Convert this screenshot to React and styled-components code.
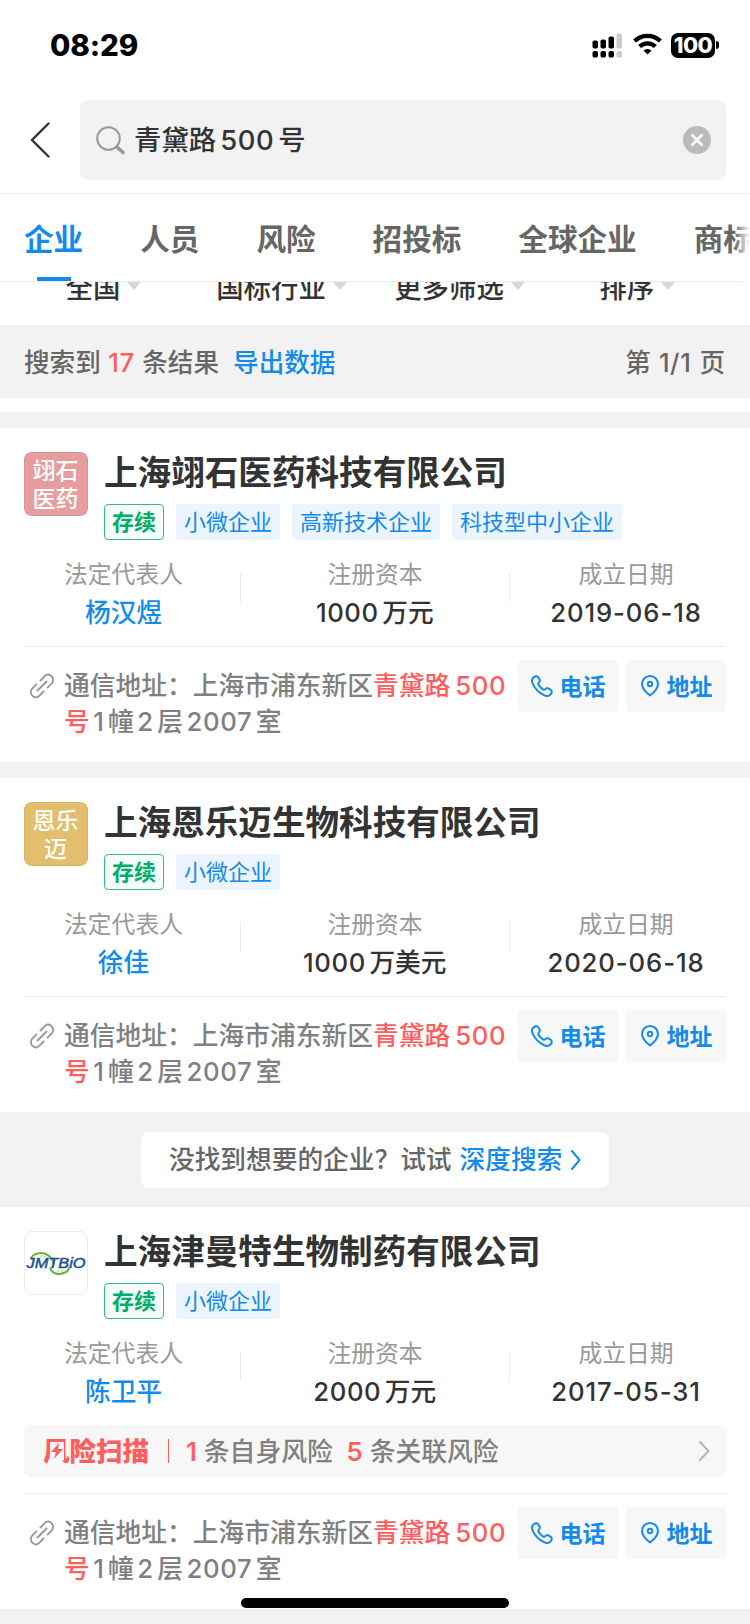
import React from "react";
import styled, { createGlobalStyle } from "styled-components";

const GlobalStyle = createGlobalStyle`
    * {
        box-sizing: border-box;
    }
    body {
        margin: 0;
        background: #f2f2f2;
        font-family: Inter, "Noto Sans CJK SC", sans-serif;
        color: #333;
    }
`;

const Page = styled.div`
    width: 750px;
    height: 1624px;
    overflow: hidden;
    position: relative;
    background: #f2f2f2;
    white-space: nowrap;
`;

const StatusBar = styled.div`
    height: 100px;
    padding: 0 31px 10px 50px;
    display: flex;
    align-items: center;
    justify-content: space-between;
    background: #fff;
`;

const Clock = styled.div`
    font-size: 29.5px;
    font-weight: 800;
    letter-spacing: -0.1px;
    color: #000;
`;

const StatusIcons = styled.div`
    display: flex;
    align-items: center;
`;

const Battery = styled.div`
    width: 44px;
    height: 25px;
    margin-left: 9px;
    border-radius: 7px;
    background: #000;
    color: #fff;
    font-size: 22px;
    line-height: 25px;
    font-weight: 800;
    letter-spacing: -0.6px;
    text-align: center;
`;

const BatteryTip = styled.div`
    width: 3px;
    height: 8px;
    margin-left: 1px;
    border-radius: 0 3px 3px 0;
    background: #000;
`;

const SearchRow = styled.div`
    height: 94px;
    padding: 0 24px 13px 30px;
    display: flex;
    align-items: center;
    border-bottom: 1px solid #ebebeb;
    background: #fff;
`;

const SearchBox = styled.div`
    flex: 1;
    height: 80px;
    margin-left: 30px;
    padding: 0 15px 0 16px;
    display: flex;
    align-items: center;
    border-radius: 8px;
    background: #f2f2f2;
`;

const Keyword = styled.div`
    flex: 1;
    margin-left: 8px;
    padding-bottom: 4px;
    font-size: 27.4px;
    font-weight: 500;
`;

const Num = styled.span`
    margin: 0 ${(props) => props.$gap || 3.5}px;
    letter-spacing: ${(props) => props.$spacing || 0.6}px;
`;

const Tabs = styled.div`
    height: 88px;
    padding-left: 24px;
    display: flex;
    gap: 57px;
    position: relative;
    border-bottom: 1px solid #ebebeb;
    background: #fff;

    &::after {
        content: "";
        position: absolute;
        top: 0;
        right: 0;
        width: 16px;
        height: 88px;
        background: linear-gradient(to right, rgba(255, 255, 255, 0), #fff);
    }
`;

const Tab = styled.div`
    flex: none;
    height: 87px;
    padding-top: 8px;
    display: flex;
    flex-direction: column;
    align-items: center;
    font-size: 29.6px;
    line-height: 75px;
    font-weight: 700;
    color: ${(props) => (props.$active ? "#128bed" : "#666")};
`;

const TabLine = styled.div`
    width: 34px;
    height: 4px;
    background: #128bed;
`;

const Filters = styled.div`
    height: 43px;
    padding: 0 22px 0 16px;
    display: grid;
    grid-template-columns: repeat(4, 178px);
    overflow: hidden;
    background: #fff;
`;

const Filter = styled.div`
    height: 40px;
    margin: -14px 3px 0 0;
    display: flex;
    align-items: center;
    justify-content: center;
    gap: 7px;
    font-size: 27.4px;
    line-height: 40px;
    font-weight: 500;
`;

const Caret = styled.i`
    margin-bottom: 5px;
    border: 7px solid transparent;
    border-top: 8px solid #d8d8d8;
    border-bottom: 0;
`;

const ResultBar = styled.div`
    height: 73px;
    padding: 0 25px 2px 24px;
    display: flex;
    align-items: center;
    justify-content: space-between;
    font-size: 25.6px;
    font-weight: 500;
    color: #666;
`;

const Blue = styled.span`
    margin-left: ${(props) => props.$ml || 0}px;
    font-weight: 500;
    color: #128bed;
`;

const Red = styled.span`
    font-weight: ${(props) => props.$weight || 500};
    color: #ff5e5e;
`;

const Spacer = styled.div`
    height: ${(props) => props.$h}px;
    background: ${(props) => props.$bg || "#f2f2f2"};
`;

const Card = styled.div`
    padding: 24px 24px 0;
    background: #fff;
`;

const Head = styled.div`
    height: 88px;
    display: flex;
    gap: 16px;
`;

const Logo = styled.div`
    width: 64px;
    height: 64px;
    padding: 1px 1px 0 0;
    display: flex;
    flex-direction: column;
    align-items: center;
    justify-content: center;
    border: 1px solid ${(props) => (props.$bg ? "rgba(0, 0, 0, 0.06)" : "#ebebeb")};
    border-radius: 8px;
    background: ${(props) => props.$bg || "#fff"};
    color: #fff;
    font-size: 23px;
    font-weight: 500;
    line-height: 28px;
`;

const Title = styled.div`
    height: 52px;
    font-size: 33.6px;
    line-height: 41px;
    font-weight: 700;
`;

const Tags = styled.div`
    display: flex;
    gap: 12px;
`;

const Tag = styled.div`
    height: 36px;
    padding: 0 8px;
    border-radius: 4px;
    background: #ebf4ff;
    font-size: 22px;
    line-height: 37px;
    color: #128bed;
`;

const StatusTag = styled(Tag)`
    padding: 0 7px;
    border: 1px solid #33bb82;
    background: #f6fcfa;
    line-height: 35px;
    font-weight: 700;
    color: #00ad65;
`;

const Stats = styled.div`
    height: 106px;
    margin: 0 -16px 0 -17px;
    padding-top: 18px;
    display: grid;
    grid-template-columns: 233px 1px 268px 1px 232px;
    text-align: center;
`;

const StatLine = styled.div`
    height: 30px;
    margin-top: 14px;
    background: #ebebeb;
`;

const StatLabel = styled.div`
    padding-top: 1px;
    font-size: 23.8px;
    line-height: 31px;
    color: #999;
`;

const StatValue = styled.div`
    margin-top: 3px;
    padding-right: ${(props) => props.$pr || 0}px;
    font-size: 25.7px;
    line-height: 40px;
    font-weight: 500;
    color: ${(props) => (props.$link ? "#128bed" : "#333")};
`;

const RiskBar = styled.div`
    height: 52px;
    margin-bottom: 16px;
    padding: 0 16px 0 20px;
    display: flex;
    align-items: center;
    border-radius: 6px;
    background: #f7f7f7;
    font-size: 25.8px;
    font-weight: 500;
    color: #808080;
`;

const RiskName = styled.div`
    margin-left: -1px;
    padding-bottom: 4px;
    position: relative;
    font-size: 26.5px;
    font-weight: 900;
    color: #ff5e5e;
`;

const Bolt = styled.svg`
    position: absolute;
    left: 6px;
    top: 12px;
`;

const RiskLine = styled.div`
    width: 1px;
    height: 24px;
    margin: 0 17px 0 19px;
    background: #ff5e5e;
`;

const RiskText = styled.div`
    flex: 1;
    padding-bottom: 4px;
`;

const AddressRow = styled.div`
    height: 116px;
    padding-top: 13px;
    display: flex;
    align-items: flex-start;
    border-top: 1px solid #ebebeb;
`;

const LinkIcon = styled.svg`
    flex: none;
    margin: 13px 9px 0 5px;
`;

const Address = styled.div`
    width: 446px;
    padding-top: 8px;
    font-size: 25.75px;
    line-height: 36px;
    font-weight: 500;
    color: #808080;
`;

const Action = styled.div`
    width: 100px;
    height: 52px;
    margin-left: 8px;
    display: flex;
    align-items: center;
    justify-content: center;
    gap: 7px;
    border-radius: 4px;
    background: #f7f7f7;
    color: #128bed;
`;

const ActionText = styled.span`
    padding-bottom: 2px;
    font-size: 23px;
    font-weight: 700;
`;

const DeepSearch = styled.div`
    height: 95px;
    padding: 20px 0 0 141px;
`;

const DeepBox = styled.div`
    width: 468px;
    height: 56px;
    display: flex;
    align-items: center;
    padding-left: 28px;
    border-radius: 8px;
    background: #fff;
    font-size: 25.7px;
    font-weight: 500;
    line-height: 54px;
    color: #666;

    svg {
        margin-left: 9px;
    }
`;

const HomeIndicator = styled.div`
    position: absolute;
    left: 241px;
    bottom: 16px;
    width: 268px;
    height: 10px;
    border-radius: 5px;
    background: #000;
`;

function SignalIcon() {
    return (
        <svg width="31" height="25" viewBox="0 0 31 25">
            <rect x="0.5" y="7.5" width="5.5" height="8" rx="1.8"/>
            <rect x="8.5" y="6.5" width="5.5" height="9" rx="1.8"/>
            <rect x="16.5" y="3.5" width="5.5" height="12" rx="1.8"/>
            <rect x="24.5" y="0.5" width="5.5" height="15" rx="1.8" fill="#ccc"/>
            <rect x="0.5" y="18" width="5.5" height="6.5" rx="1.8"/>
            <rect x="8.5" y="18" width="5.5" height="6.5" rx="1.8"/>
            <rect x="16.5" y="18" width="5.5" height="6.5" rx="1.8"/>
            <rect x="24.5" y="18" width="5.5" height="6.5" rx="1.8" fill="#ccc"/>
        </svg>
    );
}

const WifiSvg = styled.svg`
    margin: 0 0 2px 10px;
`;

function WifiIcon() {
    return (
        <WifiSvg width="29" height="22" viewBox="0 0 29 22" fill="none" stroke="#000" strokeWidth="4.2">
            <path d="M1.6 8.1a18.3 18.3 0 0 1 25.8 0"/>
            <path d="M6.6 13.6a11.2 11.2 0 0 1 15.8 0"/>
            <path d="M14.5 21.6l-4-4a5.7 5.7 0 0 1 8 0z" fill="#000" stroke="none"/>
        </WifiSvg>
    );
}

function Chevron({ color, w, h, stroke }) {
    return (
        <svg width={w} height={h} viewBox={`0 0 ${w} ${h}`} fill="none" stroke={color} strokeWidth={stroke}>
            <path d={`M1 1L${w - 1.5} ${h / 2}L1 ${h - 1}`} strokeLinecap="round"/>
        </svg>
    );
}

function JmtLogo() {
    return (
        <svg width="62" height="62" viewBox="0 0 62 62" fill="none">
            <path d="M5 26.500C8 20 17 19 22 22C27 25 28 28 29 32" stroke="#5fb336" strokeWidth="2"/>
            <path d="M25 35C26 40 31 42.300 36 41.500C41 40.500 44 38 44.500 35" stroke="#5fb336" strokeWidth="2"/>
            <path d="M17 22l-2 3M20 23l-2 3M34 37.500l-2 3M38 37.500l-2 3" stroke="#8ccb5c" strokeWidth="1"/>
            <text x="1" y="36" textLength="60" lengthAdjust="spacingAndGlyphs" fontFamily="Liberation Sans" fontStyle="italic" fontWeight="400" fontSize="14.500" fill="#17528f" stroke="#17528f" strokeWidth="0.500">JMTBiO</text>
        </svg>
    );
}

const companies = [
    {
        name: "上海翊石医药科技有限公司",
        logo: ["翊石", "医药"],
        logoBg: "#e69d9d",
        tags: ["小微企业", "高新技术企业", "科技型中小企业"],
        person: "杨汉煜",
        capital: ["1000", "万元"],
        date: "2019-06-18",
    },
    {
        name: "上海恩乐迈生物科技有限公司",
        logo: ["恩乐", "迈"],
        logoBg: "#e4be6f",
        tags: ["小微企业"],
        person: "徐佳",
        capital: ["1000", "万美元"],
        date: "2020-06-18",
    },
    {
        name: "上海津曼特生物制药有限公司",
        tags: ["小微企业"],
        person: "陈卫平",
        capital: ["2000", "万元"],
        date: "2017-05-31",
        risk: [1, 5],
    },
];

function Company({ data }) {
    return (
        <Card>
            <Head>
                <Logo $bg={data.logoBg}>
                    {data.logo ? data.logo.map((line) => <span key={line}>{line}</span>) : <JmtLogo/>}
                </Logo>
                <div>
                    <Title>{data.name}</Title>
                    <Tags>
                        <StatusTag>存续</StatusTag>
                        {data.tags.map((tag) => <Tag key={tag}>{tag}</Tag>)}
                    </Tags>
                </div>
            </Head>

            <Stats>
                <div>
                    <StatLabel>法定代表人</StatLabel>
                    <StatValue $link>{data.person}</StatValue>
                </div>
                <StatLine/>
                <div>
                    <StatLabel>注册资本</StatLabel>
                    <StatValue $pr={4}><Num>{data.capital[0]}</Num>{data.capital[1]}</StatValue>
                </div>
                <StatLine/>
                <div>
                    <StatLabel>成立日期</StatLabel>
                    <StatValue><Num $spacing={0.9}>{data.date}</Num></StatValue>
                </div>
            </Stats>

            {data.risk && (
                <RiskBar>
                    <RiskName>
                        风险扫描
                        <Bolt width="16" height="18" viewBox="0 0 16 18">
                            <path d="M1 0h14v18H1z" fill="#f7f7f7"/>
                            <path d="M10 1L2 10h5l-2 7 9-10H9z" fill="#ff5e5e"/>
                        </Bolt>
                    </RiskName>
                    <RiskLine/>
                    <RiskText>
                        <Red $weight={600}>{data.risk[0]}</Red> 条自身风险&nbsp; <Red $weight={600}>{data.risk[1]}</Red> 条关联风险
                    </RiskText>
                    <Chevron color="#b3b3b3" w={11} h={20} stroke={2}/>
                </RiskBar>
            )}

            <AddressRow>
                <LinkIcon width="26" height="26" viewBox="0 0 26 26" fill="none" stroke="#999" strokeWidth="1.900" strokeLinecap="round">
                    <path d="M8.500 17.500l9-9"/>
                    <path d="M11.500 7.500l4-4.200c1.900-1.900 4.600-2 6.600-0.500c2.500 2 2.800 5.400 0.700 7.600l-4.200 4.200"/>
                    <path d="M14.500 18.500l-4 4.200c-1.900 1.900-4.600 2-6.600 0.500c-2.500-2-2.800-5.400-0.700-7.600l4.200-4.200"/>
                </LinkIcon>
                <Address>
                    通信地址：上海市浦东新区<Red>青黛路<Num $gap={5}>500</Num></Red>
                    <br/>
                    <Red>号</Red><Num>1</Num>幢<Num>2</Num>层<Num>2007</Num>室
                </Address>
                <Action>
                    <svg width="22" height="22" viewBox="0 0 22 22" fill="none" stroke="#128bed" strokeWidth="2" strokeLinejoin="round">
                        <path d="M2.200 2.800C4 1 6 0.700 7.200 2.200L8.700 4.700C9.300 5.900 8.800 6.700 7.600 7.900C7 8.500 7.200 9.300 7.700 10.100C8.700 11.800 10.200 13.300 11.900 14.300C12.700 14.800 13.500 15 14.100 14.400C15.300 13.200 16.100 12.700 17.300 13.300L19.800 14.800C21.300 16 21 18 19.200 19.800C17.700 21.300 15.200 21.200 12.900 20.100C8.300 17.900 4.100 13.700 1.900 9.100C0.800 6.800 0.700 4.300 2.200 2.800Z"/>
                    </svg>
                    <ActionText>电话</ActionText>
                </Action>
                <Action>
                    <svg width="20" height="22" viewBox="0 0 20 22" fill="none" stroke="#128bed" strokeWidth="2" strokeLinejoin="round">
                        <path d="M10 20.500C13 18 18 14.200 18 8.900C18 4.500 14.400 1 10 1S2 4.500 2 8.900C2 14.200 7 18 10 20.500Z"/>
                        <circle cx="10" cy="9" r="2.200"/>
                    </svg>
                    <ActionText>地址</ActionText>
                </Action>
            </AddressRow>
        </Card>
    );
}

function App() {
    return (
        <Page>
            <GlobalStyle/>

            <StatusBar>
                <Clock>08:29</Clock>
                <StatusIcons>
                    <SignalIcon/>
                    <WifiIcon/>
                    <Battery>100</Battery>
                    <BatteryTip/>
                </StatusIcons>
            </StatusBar>

            <SearchRow>
                <svg width="20" height="36" viewBox="0 0 20 36" fill="none" stroke="#333" strokeWidth="2.400" strokeLinecap="round">
                    <path d="M18.500 1.500L2 18l16.500 16.500"/>
                </svg>
                <SearchBox>
                    <svg width="30" height="30" viewBox="0 0 30 30" fill="none" stroke="#999" strokeLinecap="round">
                        <circle cx="12.500" cy="13.500" r="11.300" strokeWidth="2"/>
                        <path d="M21 22l6 5.500" strokeWidth="3.600"/>
                    </svg>
                    <Keyword>青黛路<Num $gap={4}>500</Num>号</Keyword>
                    <svg width="28" height="28" viewBox="0 0 28 28">
                        <circle cx="14" cy="14" r="14" fill="#bbb"/>
                        <path d="M9.300 9.300l9.400 9.400M18.700 9.300l-9.400 9.400" stroke="#f7f7f7" strokeWidth="3" strokeLinecap="round"/>
                    </svg>
                </SearchBox>
            </SearchRow>

            <Tabs>
                <Tab $active>
                    企业
                    <TabLine/>
                </Tab>
                <Tab>人员</Tab>
                <Tab>风险</Tab>
                <Tab>招投标</Tab>
                <Tab>全球企业</Tab>
                <Tab>商标</Tab>
            </Tabs>

            <Filters>
                <Filter>全国<Caret/></Filter>
                <Filter>国标行业<Caret/></Filter>
                <Filter>更多筛选<Caret/></Filter>
                <Filter>排序<Caret/></Filter>
            </Filters>

            <ResultBar>
                <div>
                    搜索到<Red><Num $gap={7.5}>17</Num></Red>条结果<Blue $ml={14}>导出数据</Blue>
                </div>
                <div>第<Num $gap={8}>1/1</Num>页</div>
            </ResultBar>
            <Spacer $h={14} $bg="#fff"/>
            <Spacer $h={16}/>

            <Company data={companies[0]}/>
            <Spacer $h={16}/>
            <Company data={companies[1]}/>

            <DeepSearch>
                <DeepBox>
                    <span>没找到想要的企业？试试</span>
                    <Blue $ml={8}>深度搜索</Blue>
                    <Chevron color="#128bed" w={10} h={20} stroke={2}/>
                </DeepBox>
            </DeepSearch>

            <Company data={companies[2]}/>
            <HomeIndicator/>
        </Page>
    );
}

export default App;
